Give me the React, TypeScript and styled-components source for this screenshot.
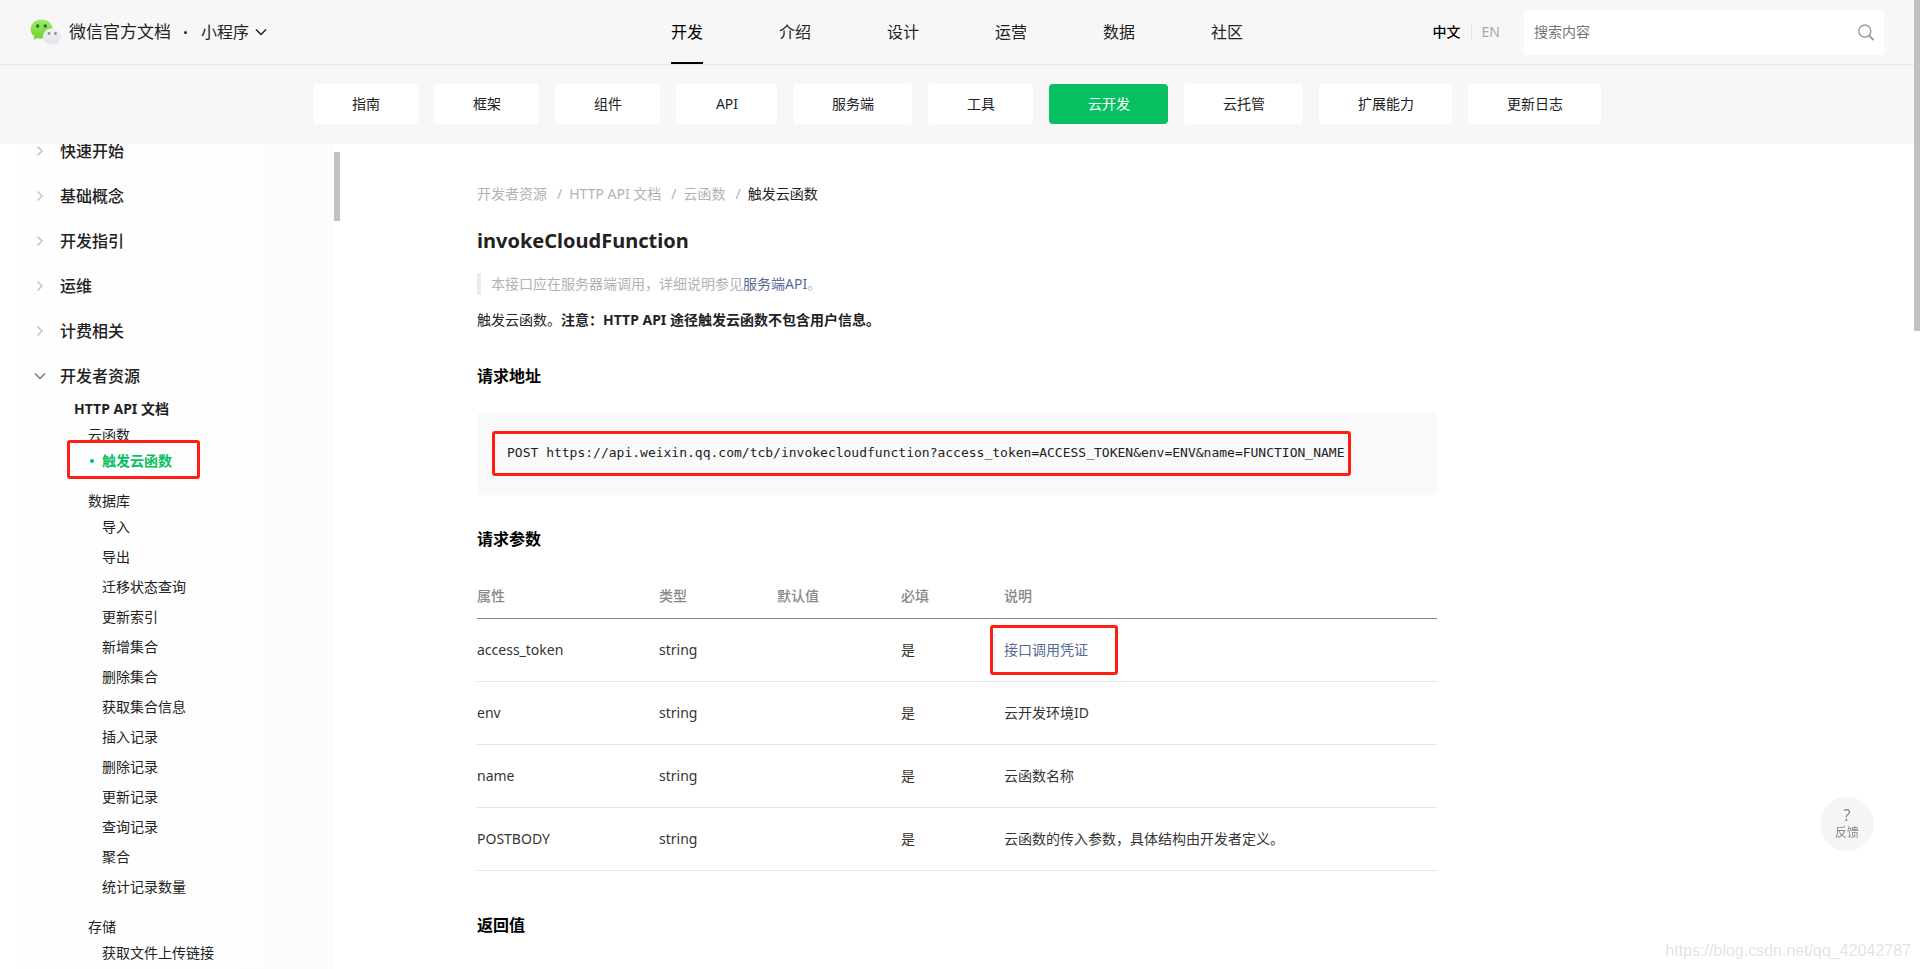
import React from "react";
import styled, { createGlobalStyle, css } from "styled-components";

const GlobalStyle = createGlobalStyle`
  *, *::before, *::after { box-sizing: border-box; }
  body {
    margin: 0;
    background: #fff;
    color: #222;
    font-family: "Noto Sans", "Noto Sans CJK SC", sans-serif;
    font-size: 14px;
    line-height: 22px;
  }
  a { color: inherit; text-decoration: none; }
  button, input { font: inherit; color: inherit; }
  ul, ol { list-style: none; margin: 0; padding: 0; }
  h1, h2, p, pre, blockquote { margin: 0; }
`;

const Page = styled.div`
  height: 100vh;
  display: flex;
  overflow: hidden;
`;

const Shell = styled.div`
  flex: 1;
  min-width: 0;
  display: flex;
  flex-direction: column;
`;

const Track = styled.div`
  width: 6px;
  flex: none;
`;

const Thumb = styled.div<{ $length: string }>`
  width: 6px;
  height: ${(p) => p.$length};
  background: #c1c1c1;
`;

const Header = styled.header`
  flex: none;
  display: grid;
  grid-template-columns: 1fr auto 1fr;
  height: 65px;
  padding: 0 30px;
  background: #f7f7f7;
  border-bottom: 1px solid #e7e7e7;
`;

const Brand = styled.div`
  display: flex;
  align-items: center;
`;

const BrandName = styled.a`
  display: flex;
  align-items: center;
  gap: 8px;
  font-size: 17px;
`;

const BrandDot = styled.span`
  width: 3px;
  height: 3px;
  margin: 0 14px 0 13px;
  border-radius: 50%;
  background: #222;
`;

const ProductButton = styled.button`
  display: flex;
  align-items: center;
  gap: 6px;
  padding: 0;
  border: 0;
  background: none;
  font-size: 16px;
`;

const MainNav = styled.nav`
  display: flex;
  gap: 76px;
`;

const MainLink = styled.a<{ $active?: boolean }>`
  display: flex;
  align-items: center;
  font-size: 16px;
  color: ${(p) => (p.$active ? "#000" : "#222")};
  border-top: 2px solid transparent;
  border-bottom: 2px solid ${(p) => (p.$active ? "#000" : "transparent")};
`;

const Tools = styled.div`
  display: flex;
  align-items: center;
  justify-content: flex-end;
`;

const LangLink = styled.a<{ $active?: boolean }>`
  color: ${(p) => (p.$active ? "#000" : "#a8a8a8")};
  font-weight: ${(p) => (p.$active ? 500 : 400)};
`;

const LangDivider = styled.span`
  width: 1px;
  height: 14px;
  margin: 0 10px;
  background: #e0e0e0;
`;

const Search = styled.form`
  display: flex;
  align-items: center;
  width: 360px;
  height: 45px;
  margin-left: 24px;
  padding: 0 10px;
  border-radius: 2px;
  background: #fff;
`;

const SearchInput = styled.input`
  flex: 1;
  min-width: 0;
  padding: 0;
  border: 0;
  outline: 0;
  background: none;
  &::placeholder { color: #757575; }
`;

const IconButton = styled.button`
  display: flex;
  padding: 0;
  border: 0;
  background: none;
`;

const SubNav = styled.nav`
  flex: none;
  display: flex;
  justify-content: center;
  gap: 16px;
  padding: 19px 0 20px;
  background: #f7f7f7;
`;

const Tab = styled.a<{ $active?: boolean }>`
  height: 40px;
  min-width: 101px;
  padding: 0 38px 0 39px;
  border-radius: 4px;
  line-height: 40px;
  text-align: center;
  color: ${(p) => (p.$active ? "#fff" : "#222")};
  background: ${(p) => (p.$active ? "#07c160" : "#fff")};
`;

const Body = styled.div`
  flex: 1;
  min-height: 0;
  display: grid;
  grid-template-columns: minmax(340px, 1fr) minmax(0, 960px) 1fr;
`;

const Sidebar = styled.aside`
  display: flex;
  min-height: 0;
  overflow: hidden;
`;

const SidebarList = styled.ul`
  width: 334px;
  margin-top: -16px;
  background: linear-gradient(90deg, #fff, #fcfcfc);
`;

const SidebarTrack = styled(Track)`
  padding-top: 8px;
`;

const SectionLink = styled.a`
  display: flex;
  align-items: center;
  gap: 14px;
  height: 45px;
  padding-left: 34px;
  font-size: 16px;
  font-weight: 500;
`;

const DocTitle = styled.a`
  display: block;
  margin-bottom: 4px;
  padding-left: 74px;
  font-weight: 700;
`;

const Group = styled.li`
  margin-bottom: 14px;
`;

const GroupTitle = styled.a`
  display: block;
  padding-left: 88px;
`;

const leafActive = css`
  color: #07c160;
  font-weight: 700;
  &::before {
    content: "";
    width: 4px;
    height: 4px;
    margin: 0 8px 0 -12px;
    border-radius: 50%;
    background: #07c160;
  }
`;

const Leaf = styled.a<{ $active?: boolean }>`
  position: relative;
  display: flex;
  align-items: center;
  height: 30px;
  padding-left: 102px;
  ${(p) => p.$active && leafActive}
`;

const Highlight = styled.span<{ $inset: string }>`
  position: absolute;
  inset: ${(p) => p.$inset};
  border: 3px solid #ff1f12;
  border-radius: 3px;
  pointer-events: none;
`;

const Article = styled.main`
  padding-top: 39px;
`;

const Crumbs = styled.ol`
  display: flex;
  color: #b2b2b2;
`;

const Crumb = styled.li<{ $current?: boolean }>`
  color: ${(p) => (p.$current ? "#222" : "#b2b2b2")};
  &:not(:first-child)::before {
    content: "/";
    margin: 0 7px 0 10px;
    color: #b2b2b2;
  }
`;

const Title = styled.h1`
  margin-top: 20px;
  font-size: 20px;
  line-height: 32px;
  font-weight: 700;
`;

const Note = styled.blockquote`
  margin-top: 16px;
  padding-left: 10px;
  border-left: 4px solid #ebebeb;
  color: #b2b2b2;
`;

const DocLink = styled.a`
  color: #576b95;
`;

const Paragraph = styled.p`
  margin: 14px 0 33px;
`;

const Strong = styled.strong`
  font-weight: 700;
`;

const Heading = styled.h2`
  margin-top: 32px;
  font-size: 16px;
  line-height: 24px;
  font-weight: 600;
  color: #000;
`;

const CodeBlock = styled.pre`
  position: relative;
  margin-top: 25px;
  padding: 29px 30px 31px;
  border-radius: 4px;
  background: #f9f9f9;
  font-family: "DejaVu Sans Mono", monospace;
  font-size: 13px;
  line-height: 22px;
`;

const Table = styled.table`
  width: 100%;
  margin: 24px 0 42px;
  border-collapse: collapse;
  table-layout: fixed;
  color: #353535;
`;

const Th = styled.th<{ $width?: string }>`
  width: ${(p) => p.$width ?? "auto"};
  height: 43px;
  padding: 0;
  text-align: left;
  font-weight: 500;
  color: #888;
  border-bottom: 1px solid #888;
`;

const Td = styled.td`
  position: relative;
  height: 63px;
  padding: 0;
  border-bottom: 1px solid #e4e4e4;
`;

const Feedback = styled.button`
  position: fixed;
  right: 46px;
  bottom: 118px;
  display: flex;
  flex-direction: column;
  align-items: center;
  justify-content: center;
  width: 54px;
  height: 54px;
  padding: 0;
  border: 0;
  border-radius: 50%;
  background: #f5f5f5;
  color: #888;
  font-size: 12px;
  line-height: 18px;
`;

const FeedbackMark = styled.span`
  font-size: 16px;
`;

const Watermark = styled.div`
  position: fixed;
  right: 9px;
  bottom: 7px;
  color: #e3e3e3;
  font-family: "Liberation Sans", Arial, sans-serif;
  font-size: 16px;
`;

const mainLinks = ["开发", "介绍", "设计", "运营", "数据", "社区"];
const tabs = ["指南", "框架", "组件", "API", "服务端", "工具", "云开发", "云托管", "扩展能力", "更新日志"];
const sections = ["快速开始", "基础概念", "开发指引", "运维", "计费相关", "开发者资源"];
const groups = [
  { title: "云函数", items: ["触发云函数"] },
  {
    title: "数据库",
    items: [
      "导入", "导出", "迁移状态查询", "更新索引", "新增集合", "删除集合", "获取集合信息",
      "插入记录", "删除记录", "更新记录", "查询记录", "聚合", "统计记录数量",
    ],
  },
  { title: "存储", items: ["获取文件上传链接"] },
];
const crumbs = ["开发者资源", "HTTP API 文档", "云函数", "触发云函数"];
const columns = [
  { label: "属性", width: "182px" },
  { label: "类型", width: "118px" },
  { label: "默认值", width: "124px" },
  { label: "必填", width: "103px" },
  { label: "说明" },
];
const params = [
  { name: "access_token", text: "接口调用凭证", link: true },
  { name: "env", text: "云开发环境ID" },
  { name: "name", text: "云函数名称" },
  { name: "POSTBODY", text: "云函数的传入参数，具体结构由开发者定义。" },
];

const WeChatLogo = () => (
  <svg width="31" height="26" viewBox="0 0 31 26" aria-hidden="true">
    <defs>
      <linearGradient id="greenBubble" x1="0" y1="0" x2="0" y2="1">
        <stop offset="0" stopColor="#9eea6a" />
        <stop offset="1" stopColor="#6fd02f" />
      </linearGradient>
      <linearGradient id="greyBubble" x1="0" y1="0" x2="0" y2="1">
        <stop offset="0" stopColor="#f2f2f5" />
        <stop offset="1" stopColor="#e3e4ea" />
      </linearGradient>
    </defs>
    <path fill="url(#greenBubble)" d="M11.5 .5C5.400 .5 .6 4.800.6 10.200c0 3 1.500 5.600 3.900 7.300L3.600 20.700l3.700-1.800c1.300.4 2.700.6 4.200.6 6.100 0 11-4.200 11-9.500S17.600 .5 11.500 .5z" />
    <circle cx="7.700" cy="7" r="1.700" fill="#187a26" />
    <circle cx="15.300" cy="7" r="1.700" fill="#187a26" />
    <path fill="url(#greyBubble)" d="M22 9.500c-5 0-9 3.500-9 7.900s4 7.900 9 7.900c1.200 0 2.300-.2 3.300-.5l3 1.200-.6-2.600c2-1.400 3.200-3.600 3.200-6 0-4.400-3.900-7.900-8.900-7.900z" />
    <circle cx="19" cy="14.500" r="1.400" fill="#8b929c" />
    <circle cx="25.500" cy="14.500" r="1.400" fill="#8b929c" />
  </svg>
);

const Chevron = ({ open, color }: { open?: boolean; color: string }) => (
  <svg width="12" height="12" viewBox="0 0 12 12" fill="none" stroke={color} strokeWidth="1.500" aria-hidden="true">
    <path d={open ? "M1 3.500l5 5 5-5" : "M3.500 1.500L8 6l-4.500 4.500"} />
  </svg>
);

const SearchIcon = () => (
  <svg width="16" height="17" viewBox="0 0 16 17" fill="none" stroke="#9b9b9b" strokeWidth="1.400" aria-hidden="true">
    <circle cx="6.800" cy="7" r="6" />
    <path d="M11 11.500l4.500 4.500" strokeWidth="1.800" />
  </svg>
);

export default function App() {
  return (
    <Page>
      <GlobalStyle />
      <Shell>
        <Header>
          <Brand>
            <BrandName href="#">
              <WeChatLogo />
              微信官方文档
            </BrandName>
            <BrandDot />
            <ProductButton type="button">
              小程序
              <Chevron open color="#222" />
            </ProductButton>
          </Brand>
          <MainNav>
            {mainLinks.map((label, i) => (
              <MainLink key={label} href="#" $active={i === 0}>{label}</MainLink>
            ))}
          </MainNav>
          <Tools>
            <LangLink href="#" $active>中文</LangLink>
            <LangDivider />
            <LangLink href="#">EN</LangLink>
            <Search>
              <SearchInput type="text" placeholder="搜索内容" aria-label="搜索内容" />
              <IconButton type="submit" aria-label="搜索"><SearchIcon /></IconButton>
            </Search>
          </Tools>
        </Header>
        <SubNav>
          {tabs.map((label) => (
            <Tab key={label} href="#" $active={label === "云开发"}>{label}</Tab>
          ))}
        </SubNav>
        <Body>
          <Sidebar>
            <SidebarList>
              {sections.map((label, i) => {
                const open = i === sections.length - 1;
                return (
                  <li key={label}>
                    <SectionLink href="#">
                      <Chevron open={open} color={open ? "#777" : "#c4c4c4"} />
                      {label}
                    </SectionLink>
                  </li>
                );
              })}
              <li>
                <DocTitle href="#">HTTP API 文档</DocTitle>
                <ul>
                  {groups.map((group) => (
                    <Group key={group.title}>
                      <GroupTitle href="#">{group.title}</GroupTitle>
                      {group.items.map((item) => {
                        const active = item === "触发云函数";
                        return (
                          <Leaf key={item} href="#" $active={active}>
                            {item}
                            {active && <Highlight $inset="-6px 134px -3px 67px" />}
                          </Leaf>
                        );
                      })}
                    </Group>
                  ))}
                </ul>
              </li>
            </SidebarList>
            <SidebarTrack>
              <Thumb $length="69px" />
            </SidebarTrack>
          </Sidebar>
          <Article>
            <Crumbs>
              {crumbs.map((label, i) => (
                <Crumb key={label} $current={i === crumbs.length - 1}>
                  <a href="#">{label}</a>
                </Crumb>
              ))}
            </Crumbs>
            <Title>invokeCloudFunction</Title>
            <Note>本接口应在服务器端调用，详细说明参见<DocLink href="#">服务端API</DocLink>。</Note>
            <Paragraph>
              触发云函数。<Strong>注意：HTTP API 途径触发云函数不包含用户信息。</Strong>
            </Paragraph>
            <Heading>请求地址</Heading>
            <CodeBlock>
              <code>POST https://api.weixin.qq.com/tcb/invokecloudfunction?access_token=ACCESS_TOKEN&amp;env=ENV&amp;name=FUNCTION_NAME</code>
              <Highlight $inset="18px 86px 19px 15px" />
            </CodeBlock>
            <Heading>请求参数</Heading>
            <Table>
              <thead>
                <tr>
                  {columns.map((column) => (
                    <Th key={column.label} $width={column.width}>{column.label}</Th>
                  ))}
                </tr>
              </thead>
              <tbody>
                {params.map((param) => (
                  <tr key={param.name}>
                    <Td>{param.name}</Td>
                    <Td>string</Td>
                    <Td />
                    <Td>是</Td>
                    <Td>
                      {param.link ? <DocLink href="#">{param.text}</DocLink> : param.text}
                      {param.link && <Highlight $inset="6px 319px 6px -14px" />}
                    </Td>
                  </tr>
                ))}
              </tbody>
            </Table>
            <Heading>返回值</Heading>
          </Article>
        </Body>
      </Shell>
      <Track>
        <Thumb $length="331px" />
      </Track>
      <Feedback type="button">
        <FeedbackMark>?</FeedbackMark>
        反馈
      </Feedback>
      <Watermark>https://blog.csdn.net/qq_42042787</Watermark>
    </Page>
  );
}
